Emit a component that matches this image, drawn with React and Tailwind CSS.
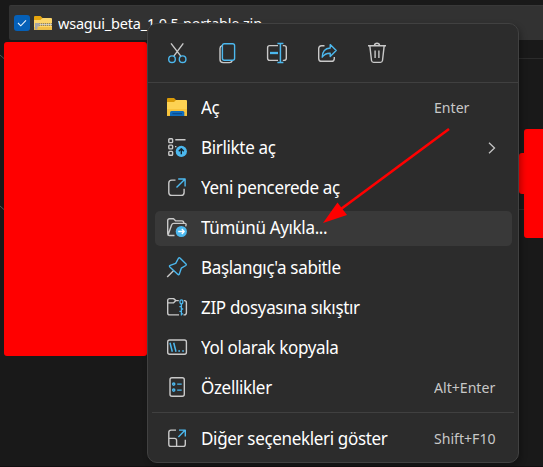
const GRAY = "#c9c9c9";
const BLUE = "#4cb8ee";

function Icon({ children, className = "" }) {
  return (
    <svg
      viewBox="0 0 24 24"
      fill="none"
      stroke={GRAY}
      strokeWidth="1.4"
      strokeLinejoin="round"
      className={`size-6 shrink-0 ${className}`}
    >
      {children}
    </svg>
  );
}

const Cut = () => (
  <Icon>
    <path d="M6 2.3 15.8 15.2M18.3 2.3 8.8 15.2" />
    <g stroke={BLUE} strokeWidth="1.4">
      <circle cx="7" cy="18.2" r="3.3" />
      <circle cx="17.6" cy="18.2" r="3.3" />
    </g>
  </Icon>
);
const Copy = () => (
  <Icon>
    <path d="M7 4.6Q5 5.2 5 7.4V18.5Q5 21.6 8.2 21.6H14.5Q16.6 21.6 17.2 19.8" />
    <rect x="7.4" y="2.7" width="12.2" height="16.6" rx="2" stroke={BLUE} strokeWidth="1.4" />
  </Icon>
);
const Rename = () => (
  <Icon>
    <path d="M13 4.6H4.7Q2.6 4.6 2.6 6.7V17.3Q2.6 19.4 4.7 19.4H13M17.8 4.6H19Q21.3 4.6 21.3 6.7V17.3Q21.3 19.4 19 19.4H17.8" />
    <path d="M15.4 2.5V21.5M12.4 2.5H18.4M12.4 21.5H18.4" stroke={BLUE} strokeWidth="1.5" />
    <path d="M5 12H13" stroke={BLUE} strokeWidth="2.3" />
  </Icon>
);
const Share = () => (
  <Icon>
    <path d="M9.5 4.7H6.6Q3.7 4.7 3.7 7.6V17.4Q3.7 20.3 6.6 20.3H16.4Q19.3 20.3 19.3 17.4V16" />
    <path
      d="M15.2 3.6 21.2 9.6 15.2 15.4V12.2Q10 12 7.2 16.2Q7.5 7.4 15.2 7Z"
      stroke={BLUE}
      strokeWidth="1.4"
    />
  </Icon>
);
const Trash = () => (
  <Icon>
    <path d="M3 4.7H21M4.8 4.7 6.5 19.5Q6.8 21.4 8.6 21.4H15.4Q17.2 21.4 17.5 19.5L19.2 4.7M9.4 4.5Q9.7 2.3 12 2.3T14.6 4.5M10.1 9.5V17M13.9 9.5V17" />
  </Icon>
);
const Folder = () => (
  <Icon>
    <g stroke="none">
      <path d="M2 3Q2 2 3 2H9L11 4V8H2Z" fill="#d99a08" />
      <path d="M2 6H9L11 4H21Q22 4 22 5V19.8H2Z" fill="#fdd253" />
      <path d="M2 13H22V19.8H2Z" fill="#f8c43c" />
      <path d="M5 20V16.5Q5 15 6.5 15H17.8Q19.3 15 19.3 16.5V20Z" fill="#0f6cbd" />
      <path d="M7.4 17.3H17V18.2H7.4Z" fill="#0a3f7a" />
    </g>
  </Icon>
);
const OpenWith = () => (
  <Icon>
    <rect x="3.8" y="2.8" width="3.8" height="3.8" rx=".8" />
    <rect x="3.8" y="9.1" width="3.8" height="3.8" rx=".8" />
    <rect x="3.8" y="15.4" width="3.8" height="3.8" rx=".8" />
    <path d="M10.3 3.7H20.5M10 10.6H11.4" />
    <circle cx="16.3" cy="15.4" r="5.6" fill={BLUE} stroke="none" />
    <path d="M16.3 18.3V12.8M13.8 15.2 16.3 12.7 18.8 15.2" stroke="#14232c" strokeWidth="1.4" />
  </Icon>
);
const NewWindow = () => (
  <Icon>
    <path d="M10.5 4.1H6.8Q3.8 4.1 3.8 7.1V16.4Q3.8 19.4 6.8 19.4H16.1Q19.1 19.4 19.1 16.4V12.7" />
    <path d="M11.5 11.6 20.1 3M13.2 3H20.1V10.4" stroke={BLUE} strokeWidth="1.4" />
  </Icon>
);
const Extract = () => (
  <Icon>
    <path d="M9.5 19.5H4.3Q2.7 19.5 2.7 17.7V4.6Q2.7 2.7 4.6 2.7H8.5L10.8 4.9H17Q18.8 4.9 18.8 7.3M3.2 18.6 6.6 9Q7.2 7.4 8.8 7.4H19.6Q21.6 7.4 21 9.3L20.7 10.4" />
    <circle cx="16.3" cy="15.5" r="5.6" fill={BLUE} stroke="none" />
    <path d="M13.2 15.5H19M16.8 13 19.2 15.5 16.8 18" stroke="#fff" strokeWidth="1.3" />
  </Icon>
);
const Pin = () => (
  <Icon>
    <path d="M2.2 20.9 8.5 14.8" />
    <path
      d="M13.6 2Q14.4 1.4 15.2 2.2L21 8Q21.7 8.8 20.8 9.5L16.3 12.2L14.4 17.9Q13.8 19.3 12.7 18.3L4.8 10.9Q3.9 9.8 5.2 9.3L10.7 7.4Z"
      stroke={BLUE}
      strokeWidth="1.4"
    />
  </Icon>
);
const Zip = () => (
  <Icon>
    <path d="M14 18.9H4.7Q2.7 18.9 2.7 16.9V4.6Q2.7 2.6 4.7 2.6H8.6L10.9 4.6H13.8M2.7 6.9H8.4L10.9 4.6M18.8 4.6H19.3Q21.4 4.6 21.4 6.7V16.8Q21.4 18.9 19.3 18.9H18.5" />
    <g stroke={BLUE} strokeWidth="1.3">
      <rect x="15" y="3.8" width="2.8" height="4.2" rx="1.4" />
      <path d="M16.4 8V19.5M14.4 10.7H16.4M16.4 13H18.2M14.4 15.4H16.4M16.4 17.8H18.2" />
    </g>
  </Icon>
);
const PathIcon = () => (
  <Icon>
    <rect x="2.7" y="4" width="18.7" height="14.3" rx="2" />
    <path d="M5 6.7 7.3 15.7M8.7 6.7 11 15.7M13.3 15.1H15M17.2 15.1H18.9" stroke={BLUE} strokeWidth="1.5" />
  </Icon>
);
const Properties = () => (
  <Icon>
    <rect x="5" y="1.8" width="14.3" height="18.5" rx="2" />
    <g stroke={BLUE} strokeWidth="1.4">
      <circle cx="8.7" cy="8.1" r="1.1" />
      <circle cx="8.7" cy="14.1" r="1.1" />
      <path d="M12.2 8.1H16.7M12.2 14.1H16.7" />
    </g>
  </Icon>
);
const More = () => (
  <Icon>
    <path d="M11 3.1H6Q3.8 3.1 3.8 5.3V17.2Q3.8 19.4 6 19.4H18.2Q20.3 19.4 20.3 17.2V12.7M3.8 11.4H9.5Q11.6 11.4 11.6 13.5V19.4" />
    <path d="M13.4 9.9 20.2 3.1M14 3.1H20.3V9.5" stroke={BLUE} strokeWidth="1.4" />
  </Icon>
);

const ITEMS = [
  { label: "Aç", icon: Folder, shortcut: "Enter" },
  { label: "Birlikte aç", icon: OpenWith, submenu: true },
  { label: "Yeni pencerede aç", icon: NewWindow },
  { label: "Tümünü Ayıkla...", icon: Extract, active: true },
  { label: "Başlangıç'a sabitle", icon: Pin },
  { label: "ZIP dosyasına sıkıştır", icon: Zip },
  { label: "Yol olarak kopyala", icon: PathIcon },
  { label: "Özellikler", icon: Properties, shortcut: "Alt+Enter" },
];

function MenuItem({ label, icon: Glyph, shortcut, submenu, active }) {
  return (
    <div className="flex h-10 items-center pl-[7px] pr-[6px]">
      <div
        className={`flex h-[35px] w-full items-center rounded-[5px] pl-[10px] ${active ? "bg-[#393939]" : ""}`}
      >
        <Glyph />
        <span className="ml-3 w-[233px] origin-left scale-x-[0.945] whitespace-nowrap pb-0.5 text-[18px] leading-6 tracking-[-0.35px] text-white">
          {label}
        </span>
        {shortcut && (
          <span className="origin-left scale-x-[0.94] whitespace-nowrap pb-0.5 text-[15px] leading-5 text-[#c8c8c8]">
            {shortcut}
          </span>
        )}
        {submenu && (
          <svg viewBox="0 0 8 12" fill="none" stroke="#c4c4c4" strokeWidth="1.3" className="ml-[54px] h-3 w-2">
            <path d="M1 .8 6.5 6 1 11.2" />
          </svg>
        )}
      </div>
    </div>
  );
}

function ZipFile() {
  return (
    <svg viewBox="0 0 18 15" className="ml-1 h-[15px] w-[18px]">
      <path d="M0 1Q0 0 1 0H6.5L8.5 2V5H0Z" fill="#e5a50e" />
      <path d="M0 4H6.5L8.5 2H17Q18 2 18 3V13.8H0Z" fill="#fcd56a" />
      <path d="M0 11H18V13.8H0Z" fill="#f2bf46" />
      <path d="M1 8.5H18" stroke="#6f6a60" strokeWidth="2.4" strokeDasharray="1.3 .7" />
      <path d="M1 8.5H18" stroke="#d8d8d8" strokeWidth=".8" />
      <path d="M1 7H5.5V10.5H3.5V13.5H1Z" fill="#a5a5a5" />
    </svg>
  );
}

export default function App() {
  return (
    <div className="relative h-[467px] w-[543px] overflow-hidden bg-[#191919] pt-[5px] font-['Noto_Sans',sans-serif]">
      <div className="ml-[9px] flex h-[35px] items-center rounded-l-[2px] border-t border-[#383838] bg-[#323232] pl-[5px]">
        <div className="flex size-4 items-center justify-center rounded-[3px] bg-[#0560b8]">
          <svg viewBox="0 0 10 8" fill="none" stroke="#e8f2fc" strokeWidth="1.1" className="h-2 w-2.5">
            <path d="M1 4 3.8 6.8 9 1.3" />
          </svg>
        </div>
        <ZipFile />
        <span className="ml-[6px] origin-left scale-x-[0.965] whitespace-nowrap text-[15px] leading-5 tracking-[-0.2px] text-white">
          wsagui_beta_1.0.5-portable.zip
        </span>
      </div>
      <div className="mt-[18px] h-px bg-[#2b2b2b]" />
      <div className="mt-[150px] h-px bg-[#2b2b2b]" />

      {/* Row connectors and redacted areas */}
      <div className="absolute left-0 top-[42px] h-[200px] w-1 bg-[#191919]" />
      <svg viewBox="0 0 5 160" fill="none" stroke="#555" className="absolute left-0 top-[52px] h-[160px] w-[5px]">
        <path d="M0 3 4.5 7M0 154 4.5 158" />
      </svg>
      <div className="absolute left-1 top-[42px] h-[314px] w-[143px] rounded-[3px] bg-[#ff0000]" />
      <div className="absolute left-[519px] top-[153px] h-[41px] w-6 rounded-[3px] bg-[#ff0000]" />
      <div className="absolute left-[524px] top-[129px] h-[109px] w-6 rounded-[3px] bg-[#ff0000]" />
      <div className="absolute bottom-0 left-0 h-px w-full bg-[#120e10]" />

      {/* Context menu */}
      <div className="absolute left-[147px] top-[23px] flex h-[440px] w-[372px] flex-col rounded-[10px] border border-[#414141] bg-[#2c2c2c] shadow-[2px_3px_6px_rgba(0,0,0,0.3)]">
        <div className="flex h-[59px] items-center gap-[26px] border-b border-[#404040] pl-[17px]">
          <Cut />
          <Copy />
          <Rename />
          <Share />
          <Trash />
        </div>
        <div className="pt-[5px]">
          {ITEMS.map((item) => (
            <MenuItem key={item.label} {...item} />
          ))}
        </div>
        <div className="mx-1 mt-[4px] h-px shrink-0 bg-[#404040]" />
        <div className="mt-[6px]">
          <MenuItem label="Diğer seçenekleri göster" icon={More} shortcut="Shift+F10" />
        </div>
      </div>

      {/* Pointer annotation */}
      <svg viewBox="0 0 543 467" className="pointer-events-none absolute inset-0 h-[467px] w-[543px]">
        <path d="M449 129 341 209" stroke="#ff0000" strokeWidth="2.6" />
        <path d="M323 223 337.5 202.5 347 215Z" fill="#ff0000" />
      </svg>
    </div>
  );
}
